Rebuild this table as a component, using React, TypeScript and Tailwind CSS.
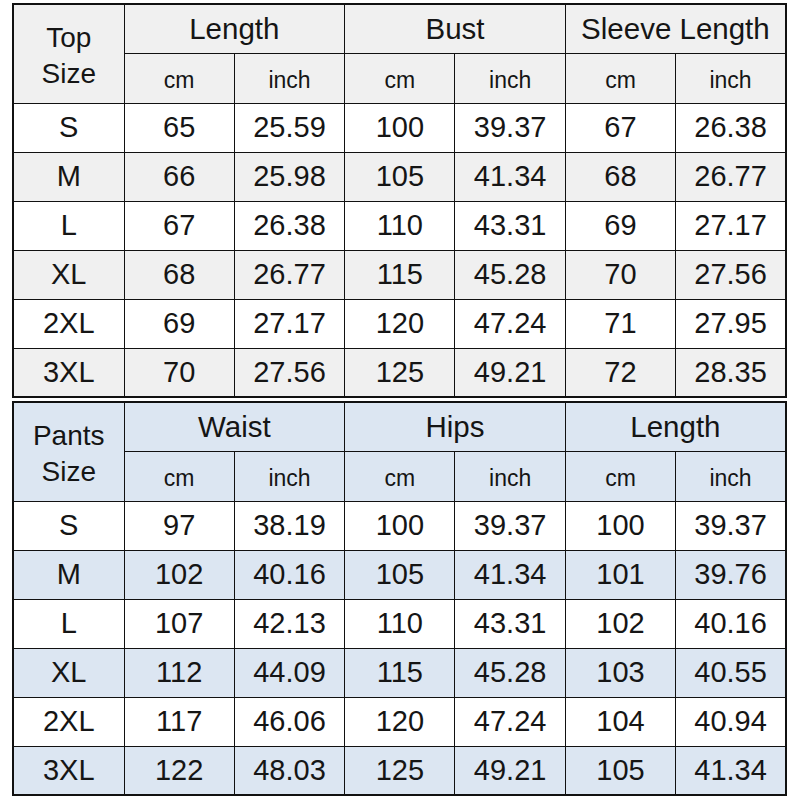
const top = {
  label: ["Top", "Size"],
  groups: ["Length", "Bust", "Sleeve Length"],
  rows: [
    ["S", "65", "25.59", "100", "39.37", "67", "26.38"],
    ["M", "66", "25.98", "105", "41.34", "68", "26.77"],
    ["L", "67", "26.38", "110", "43.31", "69", "27.17"],
    ["XL", "68", "26.77", "115", "45.28", "70", "27.56"],
    ["2XL", "69", "27.17", "120", "47.24", "71", "27.95"],
    ["3XL", "70", "27.56", "125", "49.21", "72", "28.35"],
  ],
}

const pants = {
  label: ["Pants", "Size"],
  groups: ["Waist", "Hips", "Length"],
  rows: [
    ["S", "97", "38.19", "100", "39.37", "100", "39.37"],
    ["M", "102", "40.16", "105", "41.34", "101", "39.76"],
    ["L", "107", "42.13", "110", "43.31", "102", "40.16"],
    ["XL", "112", "44.09", "115", "45.28", "103", "40.55"],
    ["2XL", "117", "46.06", "120", "47.24", "104", "40.94"],
    ["3XL", "122", "48.03", "125", "49.21", "105", "41.34"],
  ],
}

function SizeTable({ data, blue }: { data: typeof top; blue?: boolean }) {
  const head = blue ? "bg-[#dce6f2]" : "bg-[#f0f0f0]"
  return (
    <table className="w-[775px] table-fixed border-collapse border-[2.5px] border-[#111] text-center text-[#151515]">
      <colgroup>
        <col className="w-[111px]" />
        <col />
        <col />
        <col />
        <col />
        <col />
        <col />
      </colgroup>
      <thead>
        <tr className={`h-[49px] ${head}`}>
          <th rowSpan={2} className="border-[1.5px] border-[#111] text-[28px] font-normal leading-[36px] pt-1">
            {data.label[0]}
            <br />
            {data.label[1]}
          </th>
          {data.groups.map((g) => (
            <th key={g} colSpan={2} className="border-[1.5px] border-[#111] text-[29.5px] font-normal">
              {g}
            </th>
          ))}
        </tr>
        <tr className={`h-[50px] ${head}`}>
          {data.groups.map((g) => [
            <th key={g + "cm"} className="border-[1.5px] border-[#111] text-[23px] font-normal pt-1">cm</th>,
            <th key={g + "in"} className="border-[1.5px] border-[#111] text-[23px] font-normal pt-1">inch</th>,
          ])}
        </tr>
      </thead>
      <tbody>
        {data.rows.map((r, i) => (
          <tr key={r[0]} className={`h-[49px] ${i % 2 === 1 ? head : "bg-white"}`}>
            {r.map((c, j) => (
              <td key={j} className="border-[1.5px] border-[#111] text-[29px] leading-none">
                {c}
              </td>
            ))}
          </tr>
        ))}
      </tbody>
    </table>
  )
}

export default function App() {
  return (
    <div className="w-[800px] h-[800px] bg-white pt-[3px] pl-[12px] font-['Liberation_Sans',Arial,sans-serif]">
      <div className="flex flex-col gap-[3px]">
        <SizeTable data={top} />
        <SizeTable data={pants} blue />
      </div>
    </div>
  )
}
